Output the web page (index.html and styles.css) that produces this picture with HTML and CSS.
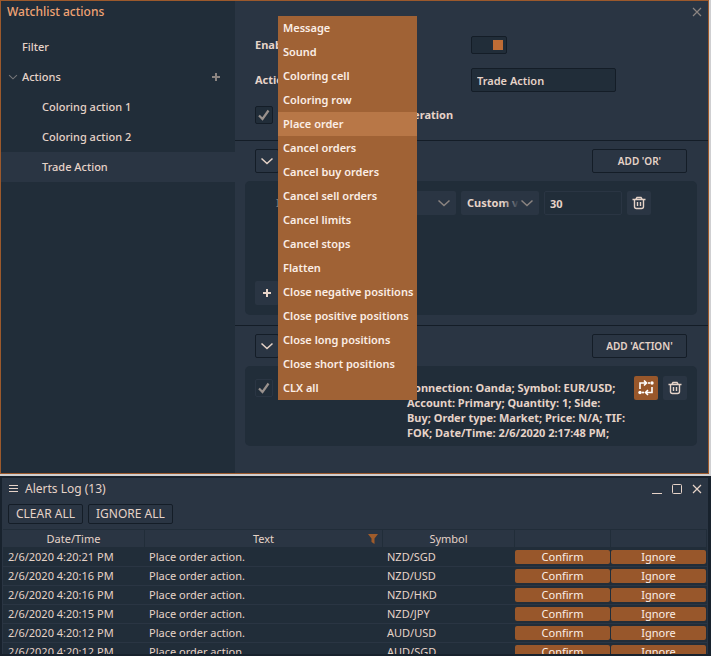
FILE: index.html
```html
<!DOCTYPE html>
<html lang="en">

<head>
    <meta charset="UTF-8">
    <meta name="viewport" content="width=device-width, initial-scale=1.0">
    <title>Watchlist actions</title>
    <link rel="stylesheet" href="styles.css">
</head>

<body>
    <!-- Shared icons -->
    <svg class="icons" aria-hidden="true">
        <symbol id="chevron" viewBox="0 0 14 14">
            <path d="M1.5 4.5 L7 9.5 L12.5 4.5" fill="none" stroke="currentColor" stroke-width="1.5" />
        </symbol>
        <symbol id="plus" viewBox="0 0 10 10">
            <path d="M5 1 V9 M1 5 H9" fill="none" stroke="currentColor" stroke-width="2" />
        </symbol>
        <symbol id="check" viewBox="0 0 18 18">
            <path d="M4 9.5 L7.5 13 L13.5 4.5" fill="none" stroke="currentColor" stroke-width="2.2" />
        </symbol>
        <symbol id="close" viewBox="0 0 10 10">
            <path d="M1 1 L9 9 M9 1 L1 9" fill="none" stroke="currentColor" stroke-width="1.2" />
        </symbol>
        <symbol id="trash" viewBox="0 0 14 14">
            <path d="M0.5 3.5 H13.5 M4 3 L5 1.5 H9 L10 3 M2.5 4 V10.5 Q2.5 12.5 4.5 12.5 H9.5 Q11.5 12.5 11.5 10.5 V4 M5.5 6 V10 M8.5 6 V10" fill="none" stroke="currentColor" stroke-width="1.4" />
        </symbol>
    </svg>

    <section class="panel">
        <nav class="sidebar">
            <h1>Watchlist actions</h1>
            <a class="item" href="#">Filter</a>
            <div class="item group">
                <svg class="icon-sm muted"><use href="#chevron" /></svg>
                <a href="#">Actions</a>
                <button type="button" class="add" aria-label="Add action"><svg class="icon-sm"><use href="#plus" /></svg></button>
            </div>
            <a class="item child" href="#">Coloring action 1</a>
            <a class="item child" href="#">Coloring action 2</a>
            <a class="item child selected" href="#">Trade Action</a>
        </nav>

        <main class="content">
            <button type="button" class="close" aria-label="Close"><svg class="icon-sm"><use href="#close" /></svg></button>

            <div class="settings">
                <label for="enabled">Enabled</label>
                <input type="checkbox" id="enabled" class="toggle" checked>
                <label for="actionName">Action name</label>
                <input type="text" id="actionName" class="name" value="Trade Action">
                <div class="once">
                    <span class="checkbox">
                        <input type="checkbox" id="once" checked>
                        <svg><use href="#check" /></svg>
                    </span>
                    <label for="once">Disable action after operation</label>
                </div>
            </div>

            <div class="bar">
                <button type="button" class="square outline" aria-label="Collapse conditions"><svg class="icon"><use href="#chevron" /></svg></button>
                <button type="button" class="outline wide">ADD 'OR'</button>
            </div>
            <div class="card conditions">
                <div class="row">
                    <span class="if">If</span>
                    <span class="select column">
                        <select aria-label="Column"><option>Last</option></select>
                        <svg class="icon"><use href="#chevron" /></svg>
                    </span>
                    <span class="select value">
                        <select aria-label="Value type"><option>Custom value</option></select>
                        <svg class="icon"><use href="#chevron" /></svg>
                    </span>
                    <input type="text" class="number" value="30" aria-label="Value">
                    <button type="button" class="square" aria-label="Delete condition"><svg class="icon"><use href="#trash" /></svg></button>
                </div>
                <button type="button" class="square" aria-label="Add condition"><svg class="icon-sm"><use href="#plus" /></svg></button>
            </div>

            <div class="bar">
                <button type="button" class="square outline" aria-label="Collapse actions"><svg class="icon"><use href="#chevron" /></svg></button>
                <button type="button" class="outline wide">ADD 'ACTION'</button>
            </div>
            <div class="card trade">
                <span class="checkbox faint">
                    <input type="checkbox" aria-label="Use action" checked>
                    <svg><use href="#check" /></svg>
                </span>
                <div class="picker">
                    <ul class="menu" role="listbox" aria-label="Action type">
                        <li role="option">Message</li>
                        <li role="option">Sound</li>
                        <li role="option">Coloring cell</li>
                        <li role="option">Coloring row</li>
                        <li role="option" aria-selected="true" class="active">Place order</li>
                        <li role="option">Cancel orders</li>
                        <li role="option">Cancel buy orders</li>
                        <li role="option">Cancel sell orders</li>
                        <li role="option">Cancel limits</li>
                        <li role="option">Cancel stops</li>
                        <li role="option">Flatten</li>
                        <li role="option">Close negative positions</li>
                        <li role="option">Close positive positions</li>
                        <li role="option">Close long positions</li>
                        <li role="option">Close short positions</li>
                        <li role="option">CLX all</li>
                    </ul>
                </div>
                <p>Connection: Oanda; Symbol: EUR/USD;<br>Account: Primary; Quantity: 1; Side:<br>Buy; Order type: Market; Price: N/A; TIF:<br>FOK; Date/Time: 2/6/2020 2:17:48 PM;</p>
                <button type="button" class="square orange" aria-label="Order settings">
                    <svg class="order-icon" viewBox="0 0 16 16">
                        <path d="M2 9 V3 H8 M6 0.5 L8.5 3 L6 5.5 M14 7 V12.5 H8 M10 10 L7.5 12.5 L10 15" fill="none" stroke="currentColor" stroke-width="1.6" />
                        <circle cx="11" cy="3" r="1.1" fill="currentColor" />
                        <circle cx="14" cy="3" r="1.7" fill="currentColor" />
                        <circle cx="5" cy="12.5" r="1.1" fill="currentColor" />
                        <circle cx="2" cy="12.5" r="1.7" fill="currentColor" />
                    </svg>
                </button>
                <button type="button" class="square" aria-label="Delete action"><svg class="icon"><use href="#trash" /></svg></button>
            </div>
        </main>
    </section>

    <section class="log">
        <header>
            <svg class="icon-sm" viewBox="0 0 10 10"><path d="M0 1.5 H9 M0 4.5 H9 M0 7.5 H9" stroke="currentColor" /></svg>
            <h2>Alerts Log (13)</h2>
            <button type="button" aria-label="Minimize"><svg class="icon-sm" viewBox="0 0 10 10"><path d="M0 9.5 H10" stroke="currentColor" /></svg></button>
            <button type="button" aria-label="Maximize"><svg class="icon-sm" viewBox="0 0 10 10"><rect x="0.5" y="0.5" width="9" height="9" rx="1" fill="none" stroke="currentColor" /></svg></button>
            <button type="button" aria-label="Close log"><svg class="icon-sm"><use href="#close" /></svg></button>
        </header>
        <div class="tools">
            <button type="button" class="outline">CLEAR ALL</button>
            <button type="button" class="outline">IGNORE ALL</button>
        </div>
        <div class="grid">
            <table>
                <colgroup>
                    <col class="c-date">
                    <col>
                    <col class="c-symbol">
                    <col class="c-button">
                    <col class="c-button">
                </colgroup>
                <thead>
                    <tr>
                        <th>Date/Time</th>
                        <th>
                            <div class="filter">
                                <span>Text</span>
                                <svg class="icon-sm" viewBox="0 0 10 10"><path d="M0 0 H10 L6.5 4.5 V10 L3.5 8 V4.5 Z" fill="currentColor" /></svg>
                            </div>
                        </th>
                        <th>Symbol</th>
                        <th></th>
                        <th></th>
                    </tr>
                </thead>
                <tbody>
                    <tr>
                        <td>2/6/2020 4:20:21 PM</td>
                        <td>Place order action.</td>
                        <td>NZD/SGD</td>
                        <td><button type="button">Confirm</button></td>
                        <td><button type="button">Ignore</button></td>
                    </tr>
                    <tr>
                        <td>2/6/2020 4:20:16 PM</td>
                        <td>Place order action.</td>
                        <td>NZD/USD</td>
                        <td><button type="button">Confirm</button></td>
                        <td><button type="button">Ignore</button></td>
                    </tr>
                    <tr>
                        <td>2/6/2020 4:20:16 PM</td>
                        <td>Place order action.</td>
                        <td>NZD/HKD</td>
                        <td><button type="button">Confirm</button></td>
                        <td><button type="button">Ignore</button></td>
                    </tr>
                    <tr>
                        <td>2/6/2020 4:20:15 PM</td>
                        <td>Place order action.</td>
                        <td>NZD/JPY</td>
                        <td><button type="button">Confirm</button></td>
                        <td><button type="button">Ignore</button></td>
                    </tr>
                    <tr>
                        <td>2/6/2020 4:20:12 PM</td>
                        <td>Place order action.</td>
                        <td>AUD/USD</td>
                        <td><button type="button">Confirm</button></td>
                        <td><button type="button">Ignore</button></td>
                    </tr>
                    <tr>
                        <td>2/6/2020 4:20:12 PM</td>
                        <td>Place order action.</td>
                        <td>AUD/SGD</td>
                        <td><button type="button">Confirm</button></td>
                        <td><button type="button">Ignore</button></td>
                    </tr>
                </tbody>
            </table>
        </div>
    </section>
</body>

</html>
```
FILE: styles.css
```css
* {
    box-sizing: border-box;
}

body {
    margin: 0;
    height: 100vh;
    display: flex;
    flex-direction: column;
    gap: 2px;
    overflow: hidden;
    background: #cfcfd1;
    color: #e6d3c8;
    font: 500 11px/16px "Noto Sans", sans-serif;
}

button,
input,
select {
    font: inherit;
    color: inherit;
    background: none;
    border: 0;
    border-radius: 2px;
    margin: 0;
    padding: 0;
}

a {
    color: inherit;
    text-decoration: none;
}

svg {
    display: block;
    flex: none;
}

.icons {
    position: absolute;
    width: 0;
    height: 0;
}

.icon {
    width: 14px;
    height: 14px;
}

.icon-sm {
    width: 10px;
    height: 10px;
}

.muted {
    color: #77777a;
}

/* Watchlist actions window */
.panel {
    display: flex;
    flex: none;
    margin-right: 2px;
    border: 1px solid #9c592c;
    background: #2a3543;
}

.sidebar {
    width: 234px;
    flex: none;
    background: #212d39;
}

h1 {
    margin: 0;
    height: 31px;
    padding: 3px 6px;
    font-size: 12px;
    font-weight: 500;
    line-height: 16px;
    color: #f0a374;
}

.item {
    display: flex;
    align-items: center;
    height: 30px;
    padding-left: 21px;
}

.group {
    padding: 0 14px 0 7px;
    gap: 4px;
}

.add {
    margin-left: auto;
    color: #8b8481;
}

.child {
    padding-left: 41px;
}

.selected {
    background: #2a3543;
}

.content {
    flex: 1;
    min-width: 0;
    position: relative;
    font-weight: 600;
    padding-bottom: 27px;
}

.close {
    position: absolute;
    top: 6px;
    right: 6px;
    color: #8b8481;
}

.settings {
    display: grid;
    grid-template-columns: 206px 145px;
    column-gap: 10px;
    row-gap: 14px;
    align-items: center;
    padding: 35px 20px 16px;
}

.settings label {
    font-weight: 700;
}

.toggle {
    appearance: none;
    width: 36px;
    height: 18px;
    border: 1px solid #141d27;
    background: linear-gradient(#be6c35, #be6c35) 22px 4px / 10px 10px no-repeat border-box #212d39;
}

.name {
    height: 24px;
    padding: 0 5px;
    width: 100%;
    border: 1px solid #141d27;
    background: #212d39;
    font-weight: 600;
}

.once {
    grid-column: 1 / -1;
    display: flex;
    align-items: center;
    gap: 16px;
}

.checkbox {
    position: relative;
    flex: none;
    width: 18px;
    height: 18px;
    color: #99918d;
}

.checkbox input {
    display: block;
    appearance: none;
    width: 18px;
    height: 18px;
    border: 1px solid #141d27;
    background: #212d39;
}

.checkbox svg {
    position: absolute;
    inset: 0;
    width: 18px;
    height: 18px;
    pointer-events: none;
}

.faint input {
    border-color: #2a3543;
}

.bar {
    display: flex;
    justify-content: space-between;
    border-top: 1px solid #141d27;
    padding: 8px 21px 8px 20px;
}

.outline {
    border: 1px solid #141d27;
}

.square {
    display: flex;
    align-items: center;
    justify-content: center;
    flex: none;
    width: 24px;
    height: 24px;
    background: #2a3543;
}

.wide {
    width: 95px;
    height: 24px;
    font-size: 10px;
}

.card {
    margin: 0 11px 0 10px;
    padding: 10px;
    border-radius: 5px;
    background: #212d39;
}

.conditions {
    display: flex;
    flex-direction: column;
    justify-content: space-between;
    min-height: 134px;
    margin-bottom: 10px;
}

.row {
    display: flex;
    align-items: center;
    gap: 5px;
}

.if {
    padding-left: 21px;
    width: 60px;
    color: #77777a;
}

.select {
    position: relative;
    width: 78px;
    height: 24px;
}

.column {
    width: 136px;
}

.select select {
    appearance: none;
    width: 100%;
    height: 24px;
    padding: 0 20px 0 6px;
    background: #2a3543;
    font-weight: 700;
}

/* fades the end of a long value */
.select::after {
    content: "";
    position: absolute;
    top: 2px;
    right: 20px;
    width: 16px;
    height: 20px;
    background: linear-gradient(to right, transparent, #2a3543);
    pointer-events: none;
}

.select svg {
    position: absolute;
    top: 5px;
    right: 5px;
    color: #8b8481;
    pointer-events: none;
}

.number {
    width: 78px;
    height: 24px;
    padding: 0 5px;
    border: 1px solid #2a3543;
    font-weight: 700;
}

.trade {
    display: flex;
    align-items: flex-start;
    gap: 5px;
    padding-bottom: 6px;
}

.trade .checkbox {
    margin-top: 3px;
}

.picker {
    position: relative;
    width: 124px;
    height: 24px;
    flex: none;
}

.menu {
    position: absolute;
    left: 0;
    bottom: 0;
    z-index: 1;
    margin: 0;
    padding: 0;
    list-style: none;
    background: #a06235;
    color: #fbeee6;
    white-space: nowrap;
}

.menu li {
    min-width: 139px;
    padding: 4px 3px 4px 5px;
}

.menu .active {
    background: #b87747;
}

.trade p {
    flex: 1;
    margin: 4px 0 0;
    font-weight: 700;
    line-height: 15px;
    white-space: nowrap;
}

.orange {
    background: #98572b;
    color: #fff;
}

.order-icon {
    width: 16px;
    height: 16px;
}

/* Alerts log window */
.log {
    display: flex;
    flex-direction: column;
    flex: 1;
    min-height: 0;
    overflow: hidden;
    border: 2px solid #18222d;
    border-right-width: 3px;
    background: #2a3543;
    font-weight: 400;
}

.log header {
    display: flex;
    flex: none;
    align-items: center;
    gap: 10px;
    height: 22px;
    padding: 0 6px 0 7px;
}

h2 {
    flex: 1;
    margin: 0 0 0 -4px;
    font-size: 12px;
    font-weight: 400;
}

.tools {
    display: flex;
    flex: none;
    gap: 5px;
    padding: 4px 6px 5px;
}

.tools button {
    height: 20px;
    padding: 0 7px;
    font-size: 12px;
}

.grid {
    flex: 1;
    min-height: 0;
    overflow: hidden;
    margin: 0 1px;
}

table {
    width: 100%;
    table-layout: fixed;
    border-collapse: separate;
    border-spacing: 0;
    background: #212d39;
}

.c-date {
    width: 142px;
}

.c-symbol {
    width: 132px;
}

.c-button {
    width: 96px;
}

th {
    height: 19px;
    padding: 0;
    border: 1px solid #212d39;
    border-left-width: 0;
    background: #2a3543;
    font-weight: 400;
}

.filter {
    display: flex;
    align-items: center;
    padding: 0 4px 0 14px;
}

.filter span {
    flex: 1;
}

.filter svg {
    color: #a05c2b;
}

td {
    height: 19px;
    padding: 0 0 0 4px;
    border-bottom: 1px solid #2a3543;
}

td:first-child {
    padding-left: 5px;
}

td:nth-child(n+4) {
    padding: 0 1px 0 0;
}

td button {
    display: block;
    width: 100%;
    height: 14px;
    line-height: 14px;
    background: #98572b;
    color: #fbeee6;
}
```
